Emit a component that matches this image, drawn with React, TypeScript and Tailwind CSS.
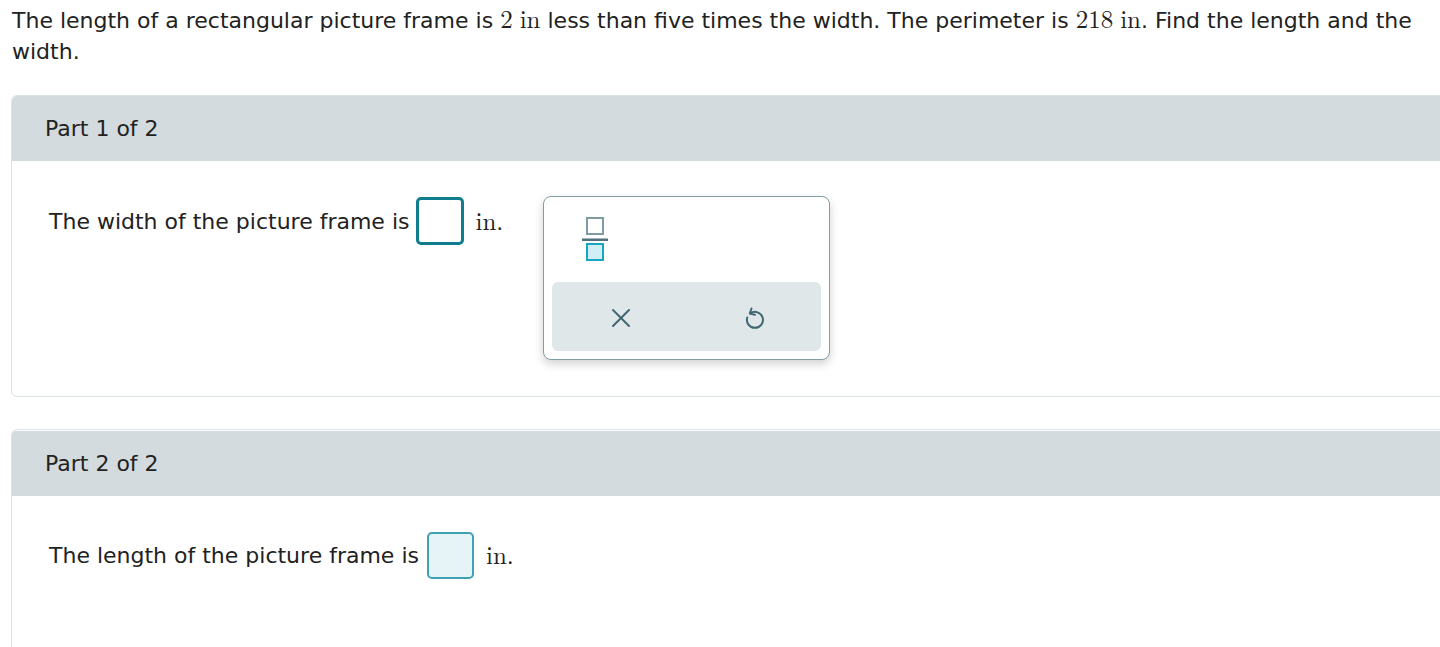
import React from "react";

const sans = { fontFamily: '"DejaVu Sans", Verdana, sans-serif' };
const serif = { fontFamily: '"Latin Modern Roman", "DejaVu Serif", "Liberation Serif", serif' };

function FracIcon() {
  return (
    <svg width="28" height="44" viewBox="0 0 28 44">
      <rect x="6" y="1" width="16" height="16" fill="#fff" stroke="#7e9aa3" strokeWidth="2" />
      <rect x="1" y="21.5" width="26" height="2.5" fill="#50707a" />
      <rect x="6" y="27" width="16" height="16" fill="#d0eef3" stroke="#17a6bf" strokeWidth="2" />
    </svg>
  );
}

function XIcon() {
  return (
    <svg width="22" height="22" viewBox="0 0 22 22">
      <path d="M3 3 L19 19 M19 3 L3 19" stroke="#3f6772" strokeWidth="2" strokeLinecap="round" fill="none" />
    </svg>
  );
}

function UndoIcon() {
  return (
    <svg width="22" height="24" viewBox="0 0 22 24">
      <path
        d="M7.5 7.2 A8 8 0 1 1 4.3 11.5"
        stroke="#3f6772"
        strokeWidth="2"
        fill="none"
        strokeLinecap="round"
      />
      <path d="M8.5 2.5 L6.8 7.6 L12 8.8" stroke="#3f6772" strokeWidth="2" fill="none" strokeLinecap="round" strokeLinejoin="round" />
    </svg>
  );
}

function M({ children }: { children: React.ReactNode }) {
  return (
    <span className="text-[25px] leading-none" style={serif}>
      {children}
    </span>
  );
}

export default function App() {
  return (
    <div className="bg-white w-[1440px] h-[647px] overflow-hidden text-[#222]" style={sans}>
      <p className="pl-[12px] pr-[8px] pt-[5px] text-[22px] leading-[31px] text-[#222]">
        The length of a rectangular picture frame is <M>2</M> <M>in</M> less than five times the width. The perimeter is{" "}
        <M>218</M> <M>in</M>. Find the length and the width.
      </p>

      <div className="ml-[11px] mt-[28px] w-[1440px] border border-[#dbe3e6] rounded-l-[6px] overflow-hidden">
        <div className="h-[65px] bg-[#d3dbde] flex items-center pl-[33px] text-[22px]">Part 1 of 2</div>
        <div className="h-[235px] relative">
          <div className="flex items-center pl-[37px] pt-[36px] text-[22px]">
            <span>The width of the picture frame is</span>
            <div className="ml-[7px] w-[48px] h-[48px] border-[3px] border-[#0f7d8e] rounded-[5px] bg-white" />
            <span className="ml-[11px] text-[25px] -mt-[3px]" style={serif}>in.</span>
          </div>
          <div className="absolute left-[531px] top-[35px] w-[287px] h-[164px] bg-white border border-[#7f9ea6] rounded-[8px] shadow-[0_4px_10px_rgba(0,0,0,0.18)] p-[8px] flex flex-col">
            <div className="pl-[29px] pt-[12px] h-[77px]">
              <FracIcon />
            </div>
            <div className="flex-1 bg-[#e0e7e9] rounded-[6px] flex items-center">
              <div className="w-1/2 flex justify-center pl-[3px] pt-[2px]"><XIcon /></div>
              <div className="w-1/2 flex justify-center pt-[2px]"><UndoIcon /></div>
            </div>
          </div>
        </div>
      </div>

      <div className="ml-[11px] mt-[32px] w-[1440px] h-[250px] border border-[#dbe3e6] rounded-l-[6px] overflow-hidden">
        <div className="h-[65px] bg-[#d3dbde] flex items-center pl-[33px] text-[22px] mt-[1px]">Part 2 of 2</div>
        <div className="flex items-center pl-[37px] pt-[36px] text-[22px]">
          <span>The length of the picture frame is</span>
          <div className="ml-[8px] w-[47px] h-[47px] border-2 border-[#3ea2b2] rounded-[5px] bg-[#e6f4f8]" />
          <span className="ml-[12px] text-[25px] -mt-[3px]" style={serif}>in.</span>
        </div>
      </div>
    </div>
  );
}
